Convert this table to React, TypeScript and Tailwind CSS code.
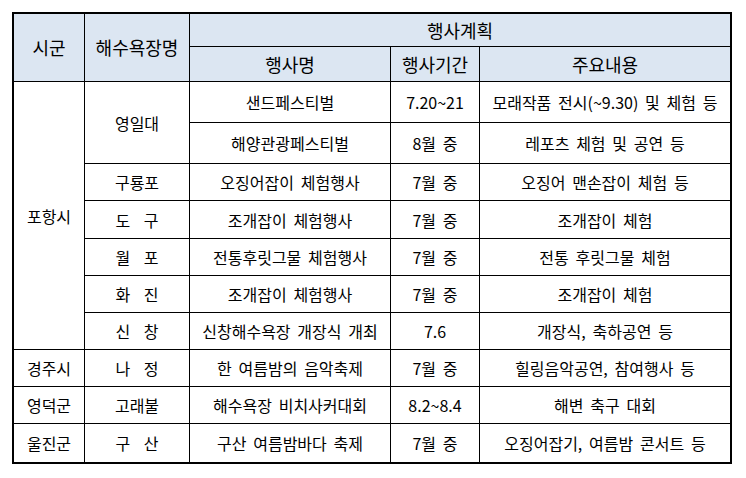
import React from 'react';

type Row = {
  city?: { name: string; span: number };
  beach?: { name: string; span: number };
  event: string;
  period: string;
  detail: string;
};

const ROWS: Row[] = [
  { city: { name: '포항시', span: 7 }, beach: { name: '영일대', span: 2 }, event: '샌드페스티벌', period: '7.20~21', detail: '모래작품 전시(~9.30) 및 체험 등' },
  { event: '해양관광페스티벌', period: '8월 중', detail: '레포츠 체험 및 공연 등' },
  { beach: { name: '구룡포', span: 1 }, event: '오징어잡이 체험행사', period: '7월 중', detail: '오징어 맨손잡이 체험 등' },
  { beach: { name: '도  구', span: 1 }, event: '조개잡이 체험행사', period: '7월 중', detail: '조개잡이 체험' },
  { beach: { name: '월  포', span: 1 }, event: '전통후릿그물 체험행사', period: '7월 중', detail: '전통 후릿그물 체험' },
  { beach: { name: '화  진', span: 1 }, event: '조개잡이 체험행사', period: '7월 중', detail: '조개잡이 체험' },
  { beach: { name: '신  창', span: 1 }, event: '신창해수욕장 개장식 개최', period: '7.6', detail: '개장식, 축하공연 등' },
  { city: { name: '경주시', span: 1 }, beach: { name: '나  정', span: 1 }, event: '한 여름밤의 음악축제', period: '7월 중', detail: '힐링음악공연, 참여행사 등' },
  { city: { name: '영덕군', span: 1 }, beach: { name: '고래불', span: 1 }, event: '해수욕장 비치사커대회', period: '8.2~8.4', detail: '해변 축구 대회' },
  { city: { name: '울진군', span: 1 }, beach: { name: '구  산', span: 1 }, event: '구산 여름밤바다 축제', period: '7월 중', detail: '오징어잡기, 여름밤 콘서트 등' },
];

const ROW_SPAN: Record<number, string> = { 1: 'row-span-1', 2: 'row-span-2', 7: 'row-span-7' };

const Cell: React.FC<{ className?: string; children: React.ReactNode }> = ({ className = '', children }) => (
  <div className={`flex items-center justify-center whitespace-pre border-black ${className}`}>{children}</div>
);

const App: React.FC = () => {
  return (
    <div className="min-h-screen bg-white pl-[12px] pt-[12px]">
      <div
        className="grid w-fit border-2 border-black text-[16px] text-black [word-spacing:0.2em] grid-cols-[71px_105px_201px_89px_250px] grid-rows-[33px_35px_41px_41px_37px_38px_37px_37px_37px_37px_37px_38px]"
        style={{ fontFamily: '"Noto Sans CJK KR", "Noto Sans", sans-serif' }}
      >
        {/* header */}
        <Cell className="row-span-2 border-r border-b bg-[#dce6f2] text-[18px]">시군</Cell>
        <Cell className="row-span-2 border-r border-b bg-[#dce6f2] text-[18px]">해수욕장명</Cell>
        <Cell className="col-span-3 border-b bg-[#dce6f2] text-[18px]">행사계획</Cell>
        <Cell className="border-r border-b bg-[#dce6f2] text-[18px]">행사명</Cell>
        <Cell className="border-r border-b bg-[#dce6f2] text-[18px]">행사기간</Cell>
        <Cell className="border-b bg-[#dce6f2] text-[18px]">주요내용</Cell>

        {ROWS.map((r, i) => {
          const last = i === ROWS.length - 1;
          const bb = last ? '' : 'border-b';
          return (
            <React.Fragment key={i}>
              {r.city && (
                <Cell className={`${ROW_SPAN[r.city.span]} border-r ${i + r.city.span >= ROWS.length ? '' : 'border-b'}`}>
                  {r.city.name}
                </Cell>
              )}
              {r.beach && (
                <Cell className={`${ROW_SPAN[r.beach.span]} border-r ${i + r.beach.span >= ROWS.length ? '' : 'border-b'}`}>
                  {r.beach.name}
                </Cell>
              )}
              <Cell className={`border-r ${bb}`}>{r.event}</Cell>
              <Cell className={`border-r ${bb}`}>{r.period}</Cell>
              <Cell className={bb}>{r.detail}</Cell>
            </React.Fragment>
          );
        })}
      </div>
    </div>
  );
};

export default App;
